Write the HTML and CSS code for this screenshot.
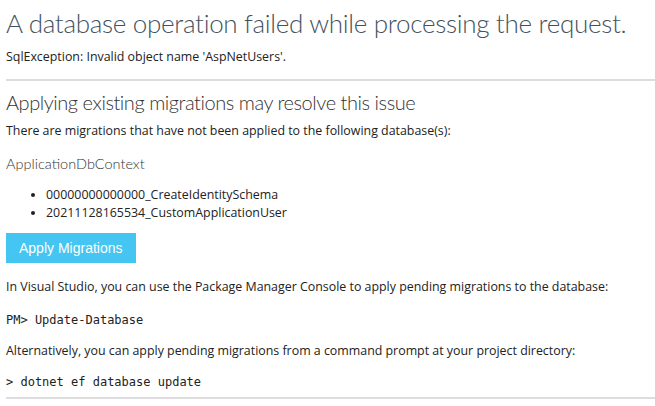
FILE: index.html
```html
<!DOCTYPE html>
<html>
<head>
<meta charset="utf-8">
<title>Internal Server Error</title>
<link rel="stylesheet" href="styles.css">
</head>
<body>
<h1 class="title">A database operation failed while processing the request.</h1>
<p class="lead">SqlException: Invalid object name 'AspNetUsers'.</p>
<hr class="rule rule-top">
<div class="section">
  <h2 class="sub">Applying existing migrations may resolve this issue</h2>
  <p class="info">There are migrations that have not been applied to the following database(s):</p>
  <h3 class="ctx">ApplicationDbContext</h3>
  <ul class="migrations">
    <li>00000000000000_CreateIdentitySchema</li>
    <li>20211128165534_CustomApplicationUser</li>
  </ul>
  <p class="actions"><button class="apply" type="button">Apply Migrations</button></p>
  <p class="info vs">In Visual Studio, you can use the Package Manager Console to apply pending migrations to the database:</p>
  <p class="cmd cmd-pm"><code>PM&gt; Update-Database</code></p>
  <p class="info alt">Alternatively, you can apply pending migrations from a command prompt at your project directory:</p>
  <p class="cmd cmd-cli"><code>&gt; dotnet ef database update</code></p>
</div>
<hr class="rule rule-bottom">
</body>
</html>
```

FILE: styles.css
```css
html, body {
  background: #fff;
}
body {
  margin: 0 0 0 6px;
  font-family: "Open Sans", "Noto Sans", sans-serif;
  font-size: 12.4px;
  color: #222;
  overflow: hidden;
}
.title {
  margin: 6px 0 0;
  font-family: Lato, "Open Sans", sans-serif;
  font-size: 26px;
  letter-spacing: -0.3px;
  line-height: 34px;
  font-weight: 300;
  color: #44525e;
  white-space: nowrap;
}
.lead {
  margin: 8px 0 0;
  line-height: 18px;
}
.rule {
  border: none;
  height: 2px;
  background: #dddddd;
  margin: 0;
}
.rule-top { margin-top: 13px; }
.rule-bottom { margin-top: 6px; }
.sub {
  margin: 8px 0 0;
  font-family: Lato, "Open Sans", sans-serif;
  font-size: 20px;
  letter-spacing: -0.45px;
  line-height: 26px;
  font-weight: 300;
  color: #333;
}
.info {
  margin: 7px 0 0;
  line-height: 18px;
}
.ctx {
  margin: 14px 0 0;
  font-family: Lato, "Open Sans", sans-serif;
  font-size: 14.5px;
  line-height: 20px;
  font-weight: 300;
  color: #333;
}
.migrations {
  margin: 12px 0 0;
  padding-left: 40px;
  line-height: 18px;
}
.actions {
  margin: 11px 0 0;
  line-height: 0;
}
.apply {
  height: 30px;
  padding: 0 13px;
  border: none;
  background: #45c5f1;
  color: #fff;
  font-family: "Liberation Sans", Arial, sans-serif;
  font-size: 14px;
}
.vs { margin-top: 15px; }
.cmd {
  margin: 15px 0 0;
  line-height: 18px;
}
.cmd code {
  font-family: "DejaVu Sans Mono", monospace;
  font-size: 12px;
}
.alt { margin-top: 13px; }
.cmd-cli { margin-top: 13px; }
```
